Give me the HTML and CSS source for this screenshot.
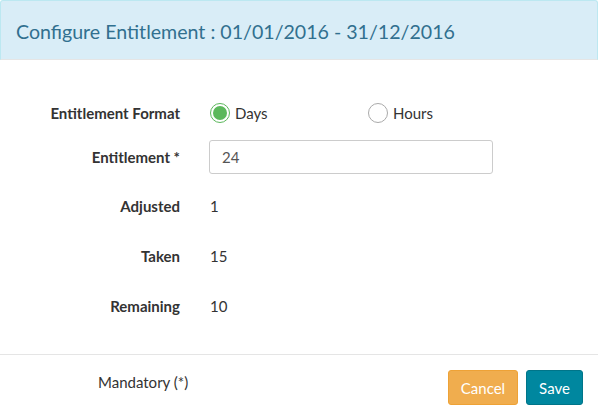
FILE: index.html
```html
<!DOCTYPE html>
<html>
<head>
<meta charset="utf-8">
<link rel="stylesheet" href="styles.css">
</head>
<body>
<div class="modal">
  <div class="modal-header">
    <h4 class="title">Configure Entitlement : 01/01/2016 - 31/12/2016</h4>
  </div>
  <div class="modal-body">
    <div class="row row-format">
      <label class="lbl">Entitlement Format</label>
      <div class="val radios">
        <span class="radio-opt"><span class="radio checked"></span><span class="radio-text">Days</span></span>
        <span class="radio-opt"><span class="radio"></span><span class="radio-text">Hours</span></span>
      </div>
    </div>
    <div class="row row-input">
      <label class="lbl">Entitlement *</label>
      <div class="val"><input class="input" type="text" value="24"></div>
    </div>
    <div class="row row-static">
      <label class="lbl">Adjusted</label>
      <div class="val">1</div>
    </div>
    <div class="row row-static">
      <label class="lbl">Taken</label>
      <div class="val">15</div>
    </div>
    <div class="row row-static">
      <label class="lbl">Remaining</label>
      <div class="val">10</div>
    </div>
  </div>
  <div class="modal-footer">
    <div class="mandatory">Mandatory (*)</div>
    <div class="buttons">
      <button class="btn btn-cancel">Cancel</button>
      <button class="btn btn-save">Save</button>
    </div>
  </div>
</div>
</body>
</html>
```

FILE: styles.css
```css
html, body {
  margin: 0;
  padding: 0;
  background: #ffffff;
}
body {
  font-family: Lato, "Open Sans", "Liberation Sans", sans-serif;
  font-size: 15px;
  color: #333333;
}
.modal {
  width: 598px;
  height: 420px;
  box-sizing: border-box;
  display: flex;
  flex-direction: column;
}
.modal-header {
  height: 60px;
  box-sizing: border-box;
  background: #d9edf7;
  border: 1px solid #bce8f1;
  border-bottom: 1px solid #e5e5e5;
  border-radius: 3px 3px 0 0;
  display: flex;
  align-items: center;
  padding: 3px 15px 0 15px;
}
.title {
  margin: 0;
  font-size: 19.6px;
  font-weight: normal;
  color: #31708f;
}
.modal-body {
  padding: 36px 0 31px 0;
  display: flex;
  flex-direction: column;
}
.row {
  display: grid;
  grid-template-columns: 180px 1fr;
  column-gap: 29px;
  align-items: center;
  height: 34px;
}
.row-format {
  margin-bottom: 10px;
}
.row-input {
  margin-bottom: 15px;
}
.row-static {
  margin-bottom: 16px;
}
.row-static:last-child {
  margin-bottom: 0;
}
.lbl {
  text-align: right;
  font-weight: bold;
  color: #333333;
}
.val {
  color: #333333;
  padding-left: 1px;
}
.radios {
  display: flex;
  align-items: center;
}
.radio-opt {
  display: flex;
  align-items: center;
  width: 158px;
}
.radio {
  width: 20px;
  height: 20px;
  box-sizing: border-box;
  border-radius: 50%;
  border: 1px solid #aaaaaa;
  background: #ffffff;
  margin-right: 5px;
  position: relative;
}
.radio.checked {
  border-color: #5cb85c;
}
.radio.checked::after {
  content: "";
  position: absolute;
  left: 2px;
  top: 2px;
  width: 14px;
  height: 14px;
  border-radius: 50%;
  background: #5cb85c;
}
.radio-text {
  color: #333333;
}
.input {
  width: 284px;
  height: 34px;
  box-sizing: border-box;
  border: 1px solid #cccccc;
  border-radius: 3px;
  padding: 0 12px;
  font-family: inherit;
  font-size: 15px;
  color: #555555;
  margin-left: -1px;
  display: block;
  outline: none;
}
.modal-footer {
  border-top: 1px solid #e5e5e5;
  padding: 15px 15px 15px 98px;
  display: flex;
  align-items: flex-start;
  justify-content: space-between;
}
.mandatory {
  color: #333333;
  margin-top: 3px;
}
.buttons {
  display: flex;
  gap: 8px;
}
.btn {
  height: 35px;
  border-radius: 3px;
  font-family: inherit;
  font-size: 15px;
  color: #ffffff;
  padding: 0 10px;
  border: 1px solid transparent;
  cursor: pointer;
}
.btn-cancel {
  background: #f0ad4e;
  border-color: #eea236;
  width: 70px;
}
.btn-save {
  background: #00879f;
  border-color: #007589;
  width: 57px;
}
```
